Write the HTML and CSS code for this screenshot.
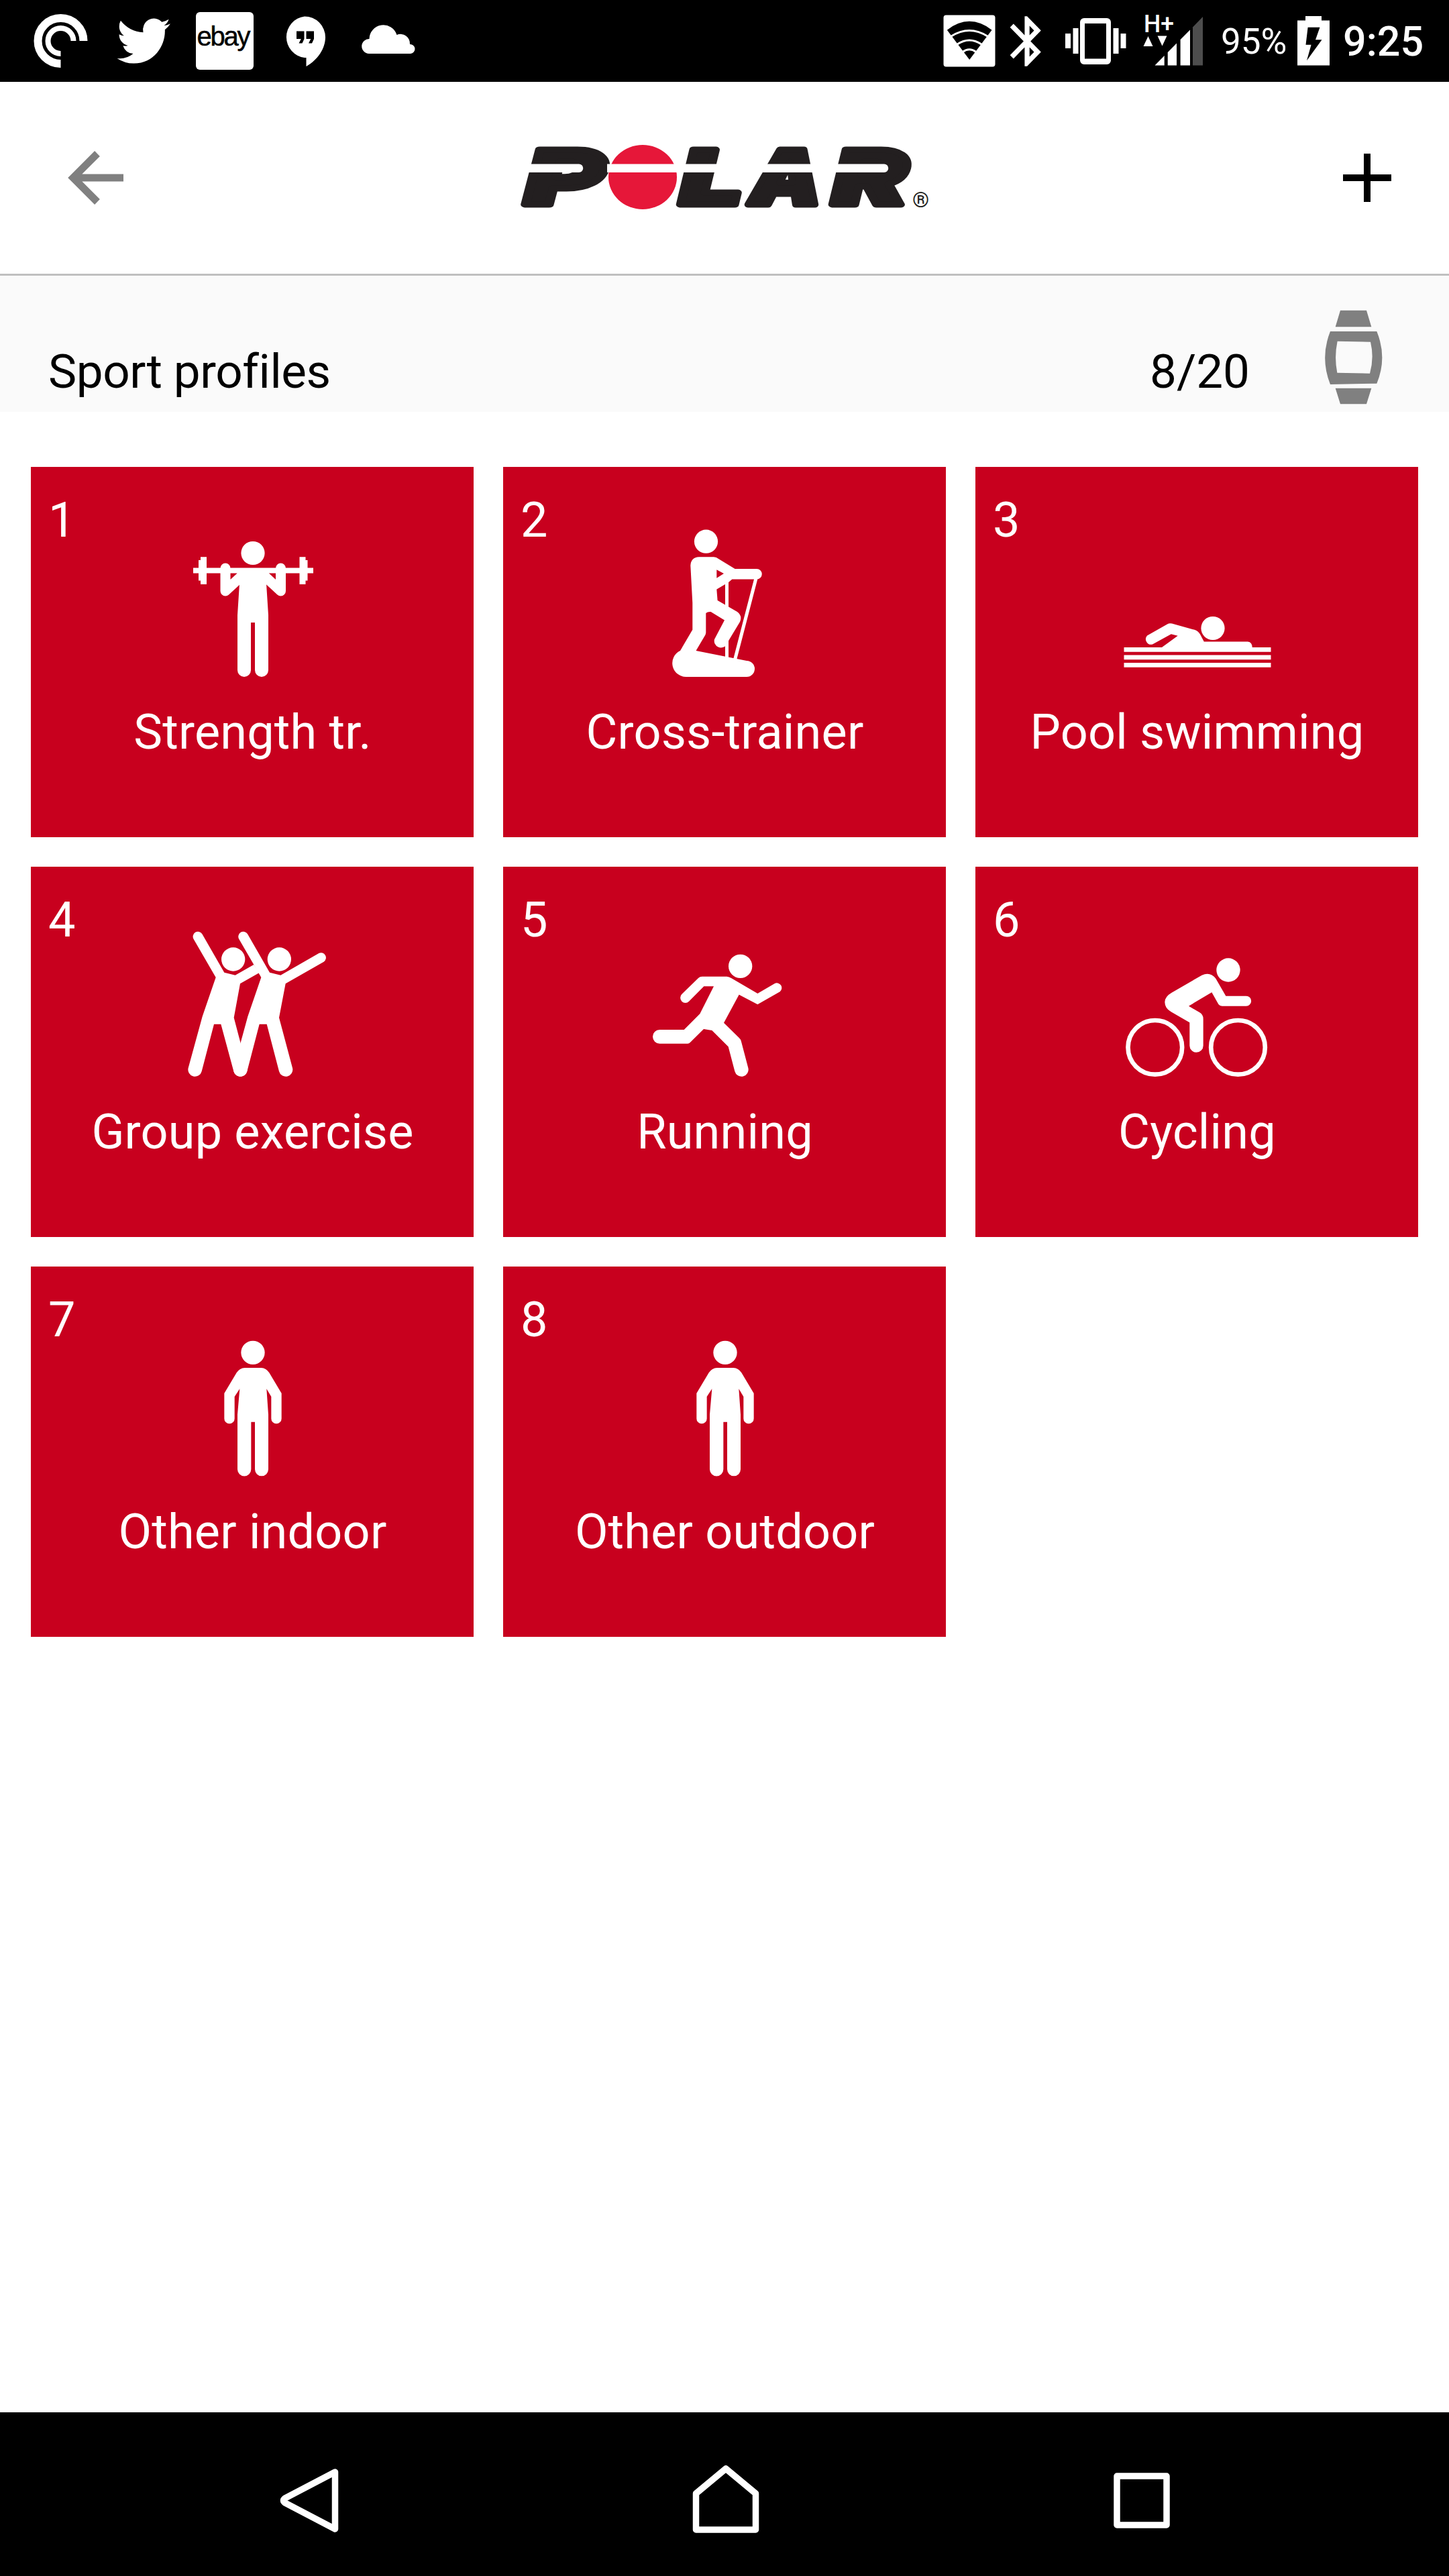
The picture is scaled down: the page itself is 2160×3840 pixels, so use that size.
FILE: index.html
```html
<!DOCTYPE html>
<html lang="en">
<head>
  <meta charset="UTF-8" />
  <meta name="viewport" content="width=device-width, initial-scale=1.0"/>
  <title>Polar – Sport profiles</title>
  <link rel="stylesheet" href="styles.css">
</head>
<body>
  <div class="status-bar">
    <div class="notifications">
      <svg width="84" height="122" viewBox="50 0 84 122" fill="none" stroke="#fff">
        <path stroke-width="12" d="M90.500 95A34 34 0 1 1 124.500 61"/>
        <path stroke-width="8" d="M90.500 80A19 19 0 1 1 109.500 61"/>
      </svg>
      <svg width="82" height="122" viewBox="172 0 82 122" fill="#fff">
        <path transform="translate(174.500 19.800) scale(3.310 3.440)" d="M23.950 4.570a10 10 0 0 1-2.820.770 4.960 4.960 0 0 0 2.160-2.720c-.950.550-2 .950-3.130 1.180a4.920 4.920 0 0 0-8.380 4.480C7.690 8.090 4.070 6.130 1.640 3.160a4.820 4.820 0 0 0-.670 2.480c0 1.710.870 3.210 2.190 4.100a4.900 4.900 0 0 1-2.230-.620v.060a4.920 4.920 0 0 0 3.950 4.830 5 5 0 0 1-2.210.080 4.940 4.940 0 0 0 4.600 3.420A9.870 9.870 0 0 1 0 19.540a13.990 13.990 0 0 0 7.560 2.210c9.050 0 14-7.500 14-13.980 0-.210 0-.420-.020-.630a9.940 9.940 0 0 0 2.460-2.550z"/>
      </svg>
      <svg width="86" height="122" viewBox="292 0 86 122">
        <rect x="292" y="18" width="86" height="86" rx="6" fill="#fff"/>
        <text class="ebay" x="293.500" y="68" textLength="80" lengthAdjust="spacing">ebay</text>
      </svg>
      <svg width="78" height="122" viewBox="417 0 78 122">
        <path fill="#fff" d="M455 24.500A31 31 0 0 0 455 86H457.500V99C475 89 486 72 486 55.500A31 31 0 0 0 455 24.500Z"/>
        <path d="M443 46.500h11.500v11.500l-3 6.500h-5l3.300-6.500h-6.800zM457.500 46.500h11.500v11.500l-3 6.500h-5l3.300-6.500h-6.800z"/>
      </svg>
      <svg width="94" height="122" viewBox="532 0 94 122" fill="#fff">
        <path d="M550 80A11 11 0 0 1 550.500 58A21 21 0 0 1 591.500 52A14 14 0 0 1 611 66A7 7 0 0 1 612 80Z"/>
      </svg>
    </div>
    <div class="system">
      <svg width="80" height="122" viewBox="1405 0 80 122">
        <rect x="1406.500" y="22.500" width="77" height="77" rx="4" fill="#fff"/>
        <path d="M1445.200 89L1411.800 44.700Q1445 19 1478.500 44.700Z"/>
        <path fill="none" stroke="#fff" stroke-width="3" d="M1418 54Q1445 37 1472 54M1427 66Q1445 54 1463 66M1435 77.500Q1445 70 1455 77.500"/>
      </svg>
      <svg width="60" height="122" viewBox="1499 0 60 122" fill="#fff">
        <path transform="translate(1487.500 16.800) scale(3.630 3.720)" d="M17.710 7.710L12 2h-1v7.590L6.410 5 5 6.410 10.590 12 5 17.590 6.410 19 11 14.410V22h1l5.710-5.710-4.300-4.290 4.300-4.290zM13 5.830l1.880 1.880L13 9.590V5.830zm1.880 10.460L13 18.170v-3.760l1.880 1.880z"/>
      </svg>
      <svg width="116" height="122" viewBox="1573 0 116 122" fill="#fff">
        <path fill-rule="evenodd" d="M1616 27h34a6 6 0 0 1 6 6v57a6 6 0 0 1-6 6h-34a6 6 0 0 1-6-6V33a6 6 0 0 1 6-6zM1617 35v52.500h32V35z"/>
        <path d="M1588 50h8v22h-8zM1599.500 42h8v38h-8zM1659.500 42h8v38h-8zM1670.500 50h8v22h-8z"/>
      </svg>
      <svg width="92" height="122" viewBox="1703 0 92 122" fill="#fff">
        <text class="network" x="1705" y="48" textLength="45" lengthAdjust="spacingAndGlyphs">H+</text>
        <path d="M1704.500 69h14l-7-15zM1725.500 53.500h14l-7 15z"/>
        <path d="M1721.500 97.500L1735.700 83V97.500ZM1740.700 78L1754 64.500V97.500H1740.700ZM1759.600 59L1774 44.500V97.500H1759.600Z"/>
        <path fill="#4d4d4d" d="M1778 40.500L1793 25V97.500H1778Z"/>
      </svg>
      <span class="percent">95%</span>
      <svg width="48" height="122" viewBox="1934 0 48 122">
        <path fill="#fff" d="M1946 24h24v6.500h12v67h-48v-67h12z"/>
        <path d="M1949.600 40.700H1967.500L1961 59.300H1970.500L1948 90.300L1954.600 66.700H1946.500Z"/>
      </svg>
      <span class="clock">9:25</span>
    </div>
  </div>

  <header>
    <svg width="84" height="80" viewBox="0 0 84 80" fill="none" stroke="#808080" stroke-width="11">
      <path d="M83 40H9M44 4L8 40L44 76"/>
    </svg>
    <!-- wordmark: each letter is cut by the white band -->
    <svg class="logo" width="620" height="150" viewBox="770 190 620 150">
      <g class="wordmark">
        <text x="783" y="305" textLength="117" lengthAdjust="spacingAndGlyphs">P</text>
        <text x="1014" y="305" textLength="93" lengthAdjust="spacingAndGlyphs">L</text>
        <text x="1118" y="305" textLength="106" lengthAdjust="spacingAndGlyphs">A</text>
        <text x="1241" y="305" textLength="111" lengthAdjust="spacingAndGlyphs">R</text>
      </g>
      <ellipse cx="958" cy="264" rx="51" ry="48" fill="#e61739"/>
      <path fill="#fff" d="M770 244.500H863a6.200 6.200 0 0 1 0 12.500H770zM905 244.500H1318a6.200 6.200 0 0 1 0 12.500H905z"/>
      <text class="reg" x="1360" y="309">®</text>
    </svg>
    <svg width="72" height="72" viewBox="0 0 72 72" stroke="#000" stroke-width="10">
      <path d="M36 0V72M0 36H72"/>
    </svg>
  </header>

  <div class="subheader">
    <h1>Sport profiles</h1>
    <span class="count">8/20</span>
    <svg width="87" height="142" viewBox="880 183 261 426" fill="#808080">
      <path d="M952 188H1069L1091 262H930ZM930 536H1091L1069 607H952Z"/>
      <path fill-rule="evenodd" d="M907 282H1115Q1163 400 1115 515L907 519Q860 400 907 282ZM939 326Q924 397 938 467L1084 470Q1104 400 1087 329Z"/>
    </svg>
  </div>

  <main class="profiles">
    <div class="tile">
      <span class="num">1</span>
      <svg viewBox="210 80 240 240">
        <circle cx="331" cy="128.500" r="17.600"/>
        <path d="M242 150.600H421V158.400H242Z"/>
        <path d="M250 139h3v-4.700h9V175h-9v-5.500h-3zM412.500 139h-3v-4.700h-9V175h9v-5.500h3z"/>
        <path class="limb" stroke-width="15" d="M290 151V185L316 161M372.500 151V185L346.500 161"/>
        <path d="M307 156H355.500L351 174L354 221V303A10 10 0 0 1 334 303V232H328V303A10 10 0 0 1 308 303V221L311 174Z"/>
      </svg>
      <span class="name">Strength tr.</span>
    </div>
    <div class="tile">
      <span class="num">2</span>
      <svg viewBox="210 80 240 240">
        <circle cx="302.500" cy="111.200" r="17.600"/>
        <path fill-rule="evenodd" d="M292 134.300H314Q318 134.500 321 137L345.600 152H378A7.800 7.800 0 0 1 378 167.600H341.300L336 172L318.300 182.400L319.600 199L349 216Q357 222 353 231L337 257.500L333 265A10 10 0 0 1 315 257L330 228.600L309.600 216Q305 215.500 302.300 218V247Q302 250 300.500 252L287.500 274L363 289A12 12 0 0 1 363 313H274A20.500 20.500 0 0 1 264 274L282.300 242.700V202.700L279.300 147Q280 135 292 134.300ZM318.300 153.200V165.800L329 159Z"/>
        <path class="limb" stroke-width="5" d="M333.500 170V285M377 166L345.600 287"/>
      </svg>
      <span class="name">Cross-trainer</span>
    </div>
    <div class="tile">
      <span class="num">3</span>
      <svg viewBox="210 80 240 240">
        <circle cx="354" cy="240.500" r="17.600"/>
        <path d="M276.600 270L301.700 251.800L291.800 249.200L264 264.500A8 8 0 0 1 256 251.500L286 234.500Q289 232.500 293 233.500L326.500 242.800Q332 244.500 335 249.500L340.800 260.500H406Q412.800 261 412.800 270Z"/>
        <path d="M221.500 269h219v6.700h-219zM221.500 280.600h219v6.700h-219zM221.500 292h219v6.700h-219z"/>
      </svg>
      <span class="name">Pool swimming</span>
    </div>
    <div class="tile">
      <span class="num">4</span>
      <svg viewBox="48 5 720 720">
        <circle cx="323" cy="179" r="53"/>
        <path d="M184 66A22 22 0 0 0 146 89L245 260L185 435L122 665A30 30 0 0 0 182 680L237 469H268L325 680A30 30 0 0 0 385 665L326 440L354 288L440 239L415 203L332 250L283 238Z"/>
        <circle cx="529" cy="179" r="53"/>
        <path d="M387 66A22 22 0 0 0 349 89L448 260L388 435L325 665A30 30 0 0 0 385 680L440 469H473L528 680A30 30 0 0 0 588 665L528 440L557 288L728 190A22 22 0 0 0 706 152L535 250L486 238Z"/>
      </svg>
      <span class="name">Group exercise</span>
    </div>
    <div class="tile">
      <span class="num">5</span>
      <svg viewBox="60 -55 720 720">
        <circle cx="491" cy="150" r="53"/>
        <path d="M320 196H430Q440 197 450 203L568 272L645 227A22 22 0 0 1 668 264L568 321L485 277L417 403L485 470Q493 477 495 487L526 605A30 30 0 0 1 466 620L437 510L364 437L327 431L267 490Q262 496 255 496H130A31 31 0 0 1 130 434H239L310 363L372 240H328L261 307A22 22 0 0 1 229 275L303 203Q310 196 320 196Z"/>
      </svg>
      <span class="name">Running</span>
    </div>
    <div class="tile">
      <span class="num">6</span>
      <svg viewBox="72 -55 720 720">
        <g fill="none" stroke="#fff" stroke-width="20">
          <circle cx="245.500" cy="513" r="121"/>
          <circle cx="616.500" cy="513" r="121"/>
        </g>
        <circle cx="573" cy="167" r="53"/>
        <path d="M320 268L455 190Q492 173 517 205L562 283H653A22 22 0 0 1 653 328H545Q535 328 529 320L499 267L396 328L445 357Q461 367 461 385V505A30 30 0 0 1 400 505V402L317 354Q289 337 289 310Q290 285 320 268Z"/>
      </svg>
      <span class="name">Cycling</span>
    </div>
    <div class="tile">
      <span class="num">7</span>
      <svg viewBox="-72 23 720 720">
        <circle cx="291" cy="168" r="53"/>
        <path d="M255 236H328Q350 237 364 258L419 350V463A23 23 0 0 1 373 463V365L352 330L360 445V690A30 30 0 0 1 300 690V478H283V690A30 30 0 0 1 222 690V445L232 330L209 365V463A23 23 0 0 1 163 463V350L218 258Q232 237 255 236Z"/>
      </svg>
      <span class="name">Other indoor</span>
    </div>
    <div class="tile">
      <span class="num">8</span>
      <svg viewBox="-72 23 720 720">
        <circle cx="291" cy="168" r="53"/>
        <path d="M255 236H328Q350 237 364 258L419 350V463A23 23 0 0 1 373 463V365L352 330L360 445V690A30 30 0 0 1 300 690V478H283V690A30 30 0 0 1 222 690V445L232 330L209 365V463A23 23 0 0 1 163 463V350L218 258Q232 237 255 236Z"/>
      </svg>
      <span class="name">Other outdoor</span>
    </div>
  </main>

  <nav>
    <svg width="120" height="120" viewBox="401 3666 120 120"><path d="M499.500 3685V3770L425 3731Q420 3727.500 425 3724Z"/></svg>
    <svg width="120" height="120" viewBox="1021 3666 120 120"><path d="M1081 3680L1125.500 3717V3771H1036.500V3717Z"/></svg>
    <svg width="120" height="120" viewBox="1642 3666 120 120"><path d="M1665 3691H1739V3764H1665Z"/></svg>
  </nav>
</body>
</html>
```
FILE: styles.css
```css
* {
  box-sizing: border-box;
}
body {
  margin: 0;
  min-height: 3840px;
  display: flex;
  flex-direction: column;
  background: #fff;
  color: #000;
  font-family: Roboto, "Liberation Sans", sans-serif;
}
svg {
  display: block;
  flex: none;
}

/* android status bar */
.status-bar {
  display: flex;
  height: 122px;
  padding-left: 50px;
  background: #000;
  color: #fff;
}
.notifications {
  display: flex;
  gap: 38px;
}
.system {
  display: flex;
  gap: 14px;
  margin-left: 779px;
}
.ebay {
  font-family: "Liberation Sans", Arial, sans-serif;
  font-size: 40px;
  stroke: #000;
  stroke-width: .5;
}
.network {
  font-size: 36px;
  font-weight: 500;
}
.percent {
  width: 111px;
  padding-left: 11px;
  font-size: 53px;
  line-height: 124px;
}
.clock {
  padding-left: 6px;
  font-size: 61px;
  font-weight: 500;
  line-height: 124px;
}

/* app header */
header {
  display: flex;
  align-items: center;
  justify-content: space-between;
  height: 289px;
  padding: 0 86px 0 101px;
  border-bottom: 3px solid #c0c0c0;
}
.logo {
  margin-right: 27px;
}
.wordmark {
  fill: #231f20;
  stroke: #231f20;
  stroke-width: 9;
  stroke-linejoin: round;
  font-family: Inter, "Liberation Sans", sans-serif;
  font-size: 113px;
  font-weight: 900;
  font-style: italic;
}
.reg {
  fill: #231f20;
  font-size: 32px;
}

.subheader {
  display: flex;
  align-items: flex-end;
  height: 203px;
  padding: 0 99px 12px 72px;
  background: #fafafa;
}
h1, .count {
  margin: 0;
  font-size: 71px;
  font-weight: 400;
  line-height: 96px;
}
h1 {
  letter-spacing: -.4px;
}
.count {
  margin-left: auto;
  margin-right: 111px;
}
.subheader svg {
  margin-bottom: -1px;
}

/* sport tiles */
.profiles {
  flex: 1;
  display: grid;
  grid-template-columns: repeat(3, 660px);
  grid-auto-rows: 552px;
  gap: 44px;
  padding: 82px 46px 0;
}
.tile {
  display: flex;
  flex-direction: column;
  align-items: center;
  background: #c8001e;
  color: #fff;
  font-size: 72px;
}
.tile svg {
  width: 240px;
  height: 240px;
  margin-top: -32px;
  fill: #fff;
}
.tile .limb {
  fill: none;
  stroke: #fff;
  stroke-linecap: round;
  stroke-linejoin: round;
}
.num {
  align-self: flex-start;
  height: 112px;
  padding: 32px 0 0 26px;
  line-height: 96px;
}
.name {
  margin-top: 28px;
  padding-left: 1px;
  letter-spacing: .2px;
  line-height: 96px;
}

/* android navigation bar */
nav {
  display: flex;
  justify-content: space-between;
  height: 244px;
  padding: 70px 398px 0 401px;
  background: #000;
}
nav path {
  fill: none;
  stroke: #fff;
  stroke-width: 9.5;
  stroke-linejoin: round;
}
```
